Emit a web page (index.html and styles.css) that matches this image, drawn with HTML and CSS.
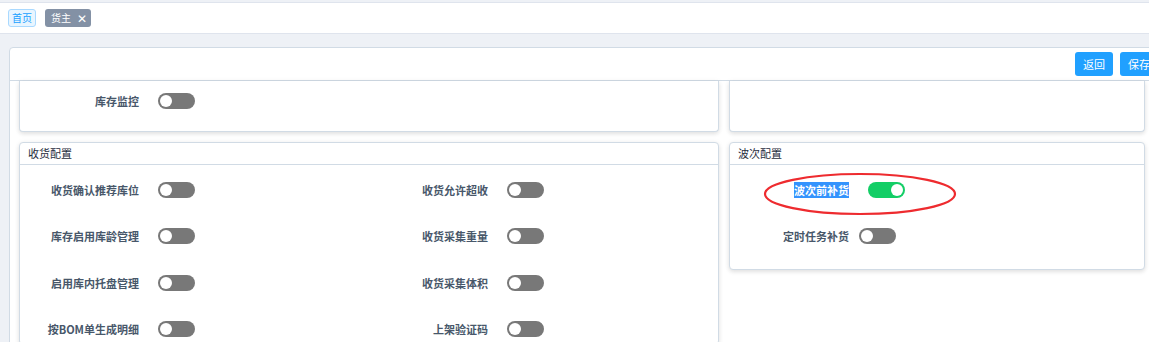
FILE: index.html
```html
<!DOCTYPE html>
<html lang="zh-CN">
<head>
    <meta charset="UTF-8">
    <meta name="viewport" content="width=device-width, initial-scale=1.0">
    <title>货主</title>
    <link rel="stylesheet" href="styles.css">
</head>
<body>
    <div class="tabs-bar">
        <span class="tag tag-home">首页</span>
        <span class="tag tag-active">货主 <span class="tag-close">✕</span></span>
    </div>

    <div class="main">
        <div class="panel">
            <div class="panel-head">
                <button class="btn">返回</button>
                <button class="btn">保存</button>
            </div>
            <div class="panel-body">
                <div class="grid">
                    <div class="card card-cut">
                        <div class="form-cols">
                            <div class="item">
                                <span class="label">库存监控</span>
                                <span class="switch"></span>
                            </div>
                        </div>
                    </div>
                    <div class="card card-cut"></div>

                    <div class="card">
                        <div class="card-head">收货配置</div>
                        <div class="form-cols">
                            <div class="item">
                                <span class="label">收货确认推荐库位</span>
                                <span class="switch"></span>
                            </div>
                            <div class="item">
                                <span class="label">收货允许超收</span>
                                <span class="switch"></span>
                            </div>
                            <div class="item">
                                <span class="label">库存启用库龄管理</span>
                                <span class="switch"></span>
                            </div>
                            <div class="item">
                                <span class="label">收货采集重量</span>
                                <span class="switch"></span>
                            </div>
                            <div class="item">
                                <span class="label">启用库内托盘管理</span>
                                <span class="switch"></span>
                            </div>
                            <div class="item">
                                <span class="label">收货采集体积</span>
                                <span class="switch"></span>
                            </div>
                            <div class="item">
                                <span class="label">按BOM单生成明细</span>
                                <span class="switch"></span>
                            </div>
                            <div class="item">
                                <span class="label">上架验证码</span>
                                <span class="switch"></span>
                            </div>
                        </div>
                    </div>

                    <div class="card card-short">
                        <div class="card-head">波次配置</div>
                        <div class="form-one">
                            <div class="item">
                                <span class="label"><span class="picked">波次前补货</span></span>
                                <span class="switch on"></span>
                            </div>
                            <div class="item">
                                <span class="label label-narrow">定时任务补货</span>
                                <span class="switch"></span>
                            </div>
                        </div>
                    </div>
                </div>
            </div>
        </div>
    </div>

    <!-- red annotation ring drawn over the screenshot -->
    <svg class="mark" width="200" height="48" viewBox="0 0 200 48">
        <ellipse cx="100" cy="24" rx="95" ry="20" fill="none" stroke="#ee2b2f" stroke-width="2.2"/>
    </svg>
</body>
</html>
```

FILE: styles.css
```css
html, body {
    margin: 0;
    height: 100%;
    overflow: hidden;
}
body {
    font-family: "Noto Sans CJK SC", "Noto Sans", sans-serif;
    font-size: 11px;
    background-color: #eef1f6;
    position: relative;
}
.tabs-bar {
    background-color: #fff;
    border-top: 1px solid #dfe4ed;
    border-bottom: 1px solid #dfe4ed;
    margin-top: 2px;
    height: 30px;
    display: flex;
    align-items: center;
    gap: 9px;
    padding-left: 8px;
}
.tag {
    height: 18px;
    box-sizing: border-box;
    display: inline-flex;
    align-items: center;
    border-radius: 3px;
    font-size: 10px;
    line-height: 1;
}
.tag-home {
    width: 28px;
    justify-content: center;
    background-color: #e8f5ff;
    border: 1px solid #a9d9ff;
    color: #20a0ff;
}
.tag-active {
    width: 46px;
    padding-left: 6px;
    background-color: #8391a5;
    color: #fff;
}
.tag-close {
    margin-left: 6px;
    font-size: 12px;
}
.main {
    padding: 13px 0 0 9px;
}
.panel {
    width: 1151px;
    background-color: #fff;
    border: 1px solid #d1dbe5;
    border-radius: 4px;
    height: 320px;
}
.panel-head {
    height: 32px;
    border-bottom: 1px solid #d1dbe5;
    display: flex;
    justify-content: flex-end;
    align-items: center;
    gap: 7px;
    padding-right: 3px;
}
.btn {
    width: 38px;
    height: 24px;
    border: none;
    border-radius: 3px;
    background-color: #20a0ff;
    color: #fff;
    font-family: inherit;
    font-size: 11px;
    padding: 0;
}
.panel-body {
    padding: 0 14px 0 9px;
}
.grid {
    display: grid;
    grid-template-columns: 700px 416px;
    column-gap: 10px;
    row-gap: 10px;
}
.card {
    background-color: #fff;
    border: 1px solid #d1dbe5;
    border-radius: 4px;
    box-shadow: 0 2px 4px rgba(0, 0, 0, 0.1), 0 0 6px rgba(0, 0, 0, 0.04);
}
.card-cut {
    border-top: none;
    border-top-left-radius: 0;
    border-top-right-radius: 0;
    height: 51px;
    padding-top: 5px;
    box-sizing: border-box;
}
.card-short {
    align-self: start;
    padding-bottom: 18px;
}
.card-head {
    height: 21px;
    line-height: 21px;
    padding-left: 8px;
    color: #1f2d3d;
    border-bottom: 1px solid #d1dbe5;
}
.form-cols {
    display: grid;
    grid-template-columns: 349px 349px;
    row-gap: 16.3px;
}
.card .card-head + .form-cols,
.form-one {
    padding-top: 10px;
}
.form-one {
    display: flex;
    flex-direction: column;
    gap: 16.3px;
}
.item {
    display: flex;
    align-items: center;
    height: 30px;
}
.label {
    width: 138px;
    box-sizing: border-box;
    padding-right: 19px;
    text-align: right;
    color: #48576a;
    font-weight: 700;
}
.label-narrow {
    width: 129px;
    padding-right: 10px;
}
.picked {
    background-color: #3393fd;
    color: #fff;
}
.switch {
    width: 37px;
    height: 16px;
    border-radius: 8px;
    background-color: #787878;
    position: relative;
}
.switch::after {
    content: "";
    position: absolute;
    top: 2px;
    left: 2px;
    width: 12px;
    height: 12px;
    border-radius: 50%;
    background-color: #fff;
}
.switch.on {
    background-color: #13ce66;
}
.switch.on::after {
    left: 23px;
}
.mark {
    position: absolute;
    left: 760px;
    top: 170px;
}
```
